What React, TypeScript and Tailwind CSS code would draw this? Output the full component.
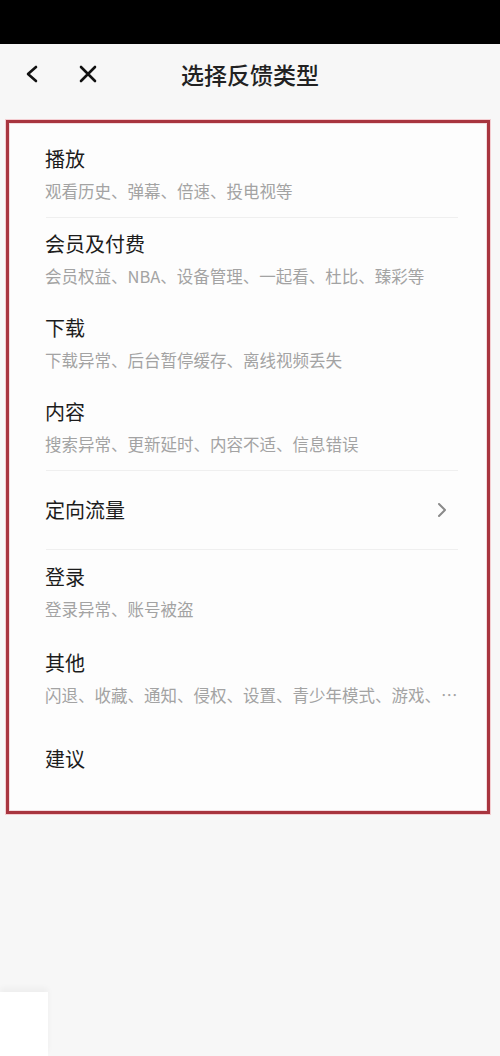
import React from "react";

interface Item {
  title: string;
  desc?: string;
  arrow?: boolean;
  h: string;
  divider?: boolean;
}

const items: Item[] = [
  { title: "播放", desc: "观看历史、弹幕、倍速、投电视等", h: "h-[84px]", divider: true },
  { title: "会员及付费", desc: "会员权益、NBA、设备管理、一起看、杜比、臻彩等", h: "h-[84px]" },
  { title: "下载", desc: "下载异常、后台暂停缓存、离线视频丢失", h: "h-[84px]" },
  { title: "内容", desc: "搜索异常、更新延时、内容不适、信息错误", h: "h-[84px]", divider: true },
  { title: "定向流量", arrow: true, h: "h-[78px]", divider: true },
  { title: "登录", desc: "登录异常、账号被盗", h: "h-[86px]" },
  { title: "其他", desc: "闪退、收藏、通知、侵权、设置、青少年模式、游戏、…", h: "h-[86px]" },
  { title: "建议", h: "h-[74px]" },
];

const App: React.FC = () => {
  return (
    <div
      className="flex min-h-[1056px] w-[500px] flex-col bg-[#f7f7f7]"
      style={{ fontFamily: '"Noto Sans CJK SC", "Noto Sans", sans-serif' }}
    >
      {/* status bar */}
      <div className="h-[44px] bg-black" />

      {/* header */}
      <div className="relative flex h-[60px] items-center">
        <div className="flex items-center gap-[36px] pl-[24px]">
          <svg width="18" height="20" viewBox="0 0 18 20" fill="none">
            <path d="M12 3 L4 10 L12 17" stroke="#111" strokeWidth="2.6" strokeLinecap="round" strokeLinejoin="round" />
          </svg>
          <svg width="20" height="20" viewBox="0 0 20 20" fill="none">
            <path d="M3 3 L17 17 M17 3 L3 17" stroke="#111" strokeWidth="2.6" strokeLinecap="round" />
          </svg>
        </div>
        <div className="pointer-events-none absolute left-0 right-0 text-center text-[23px] font-medium leading-none text-[#222]">
          选择反馈类型
        </div>
      </div>

      {/* card */}
      <div className="ml-[6px] mr-[10px] mt-[16px] border-[3px] border-[#a8353f] bg-[#fdfdfd] pt-[10px] pb-[15px] pl-[36px] pr-[29px] shadow-[0_0_0_1px_#f4cdd1,inset_0_0_0_1px_#f3dcdf]">
        {items.map((it) => (
          <div key={it.title}>
            <div className={`flex items-center ${it.h}`}>
              <div className="min-w-0 flex-1">
                <div className="text-[20px] leading-[26px] text-[#1c1c1c]">{it.title}</div>
                {it.desc && (
                  <div className="mt-[6px] whitespace-nowrap text-[16.5px] leading-[26px] text-[#a3a3a3]">
                    {it.desc}
                  </div>
                )}
              </div>
              {it.arrow && (
                <svg width="12" height="18" viewBox="0 0 12 18" fill="none" className="mr-[10px]">
                  <path d="M3 3 L9 9 L3 15" stroke="#8a8a8a" strokeWidth="2" strokeLinecap="round" strokeLinejoin="round" />
                </svg>
              )}
            </div>
            {it.divider && <div className="ml-[1px] h-px bg-[#efefef]" />}
          </div>
        ))}
      </div>

      {/* bottom-left leftover */}
      <div className="mt-auto h-[64px] w-[48px] bg-white shadow-[0_-4px_6px_rgba(0,0,0,0.04)]" />
    </div>
  );
};

export default App;
